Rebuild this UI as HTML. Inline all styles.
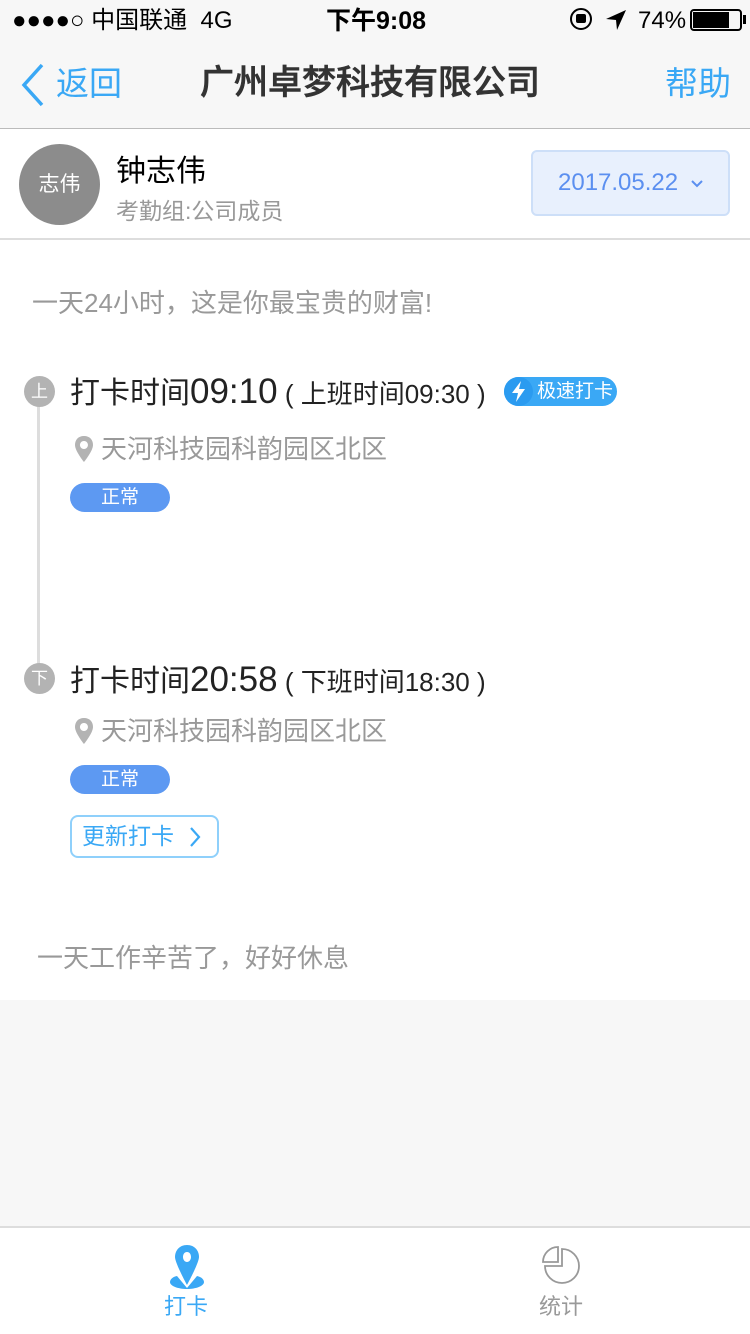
<!DOCTYPE html>
<html><head><meta charset="utf-8"><style>
*{margin:0;padding:0;box-sizing:border-box}
body{width:750px;height:1334px;position:relative;background:#f7f7f7;font-family:"Liberation Sans","Noto Sans CJK SC",sans-serif;overflow:hidden}
.a{position:absolute;white-space:nowrap}
</style></head><body>
<!-- status bar -->
<div class="a" style="left:12px;top:6px;font-size:24px;color:#000;line-height:30px">●●●●○ 中国联通 &nbsp;4G</div>
<div class="a" style="left:326px;top:6px;font-size:25px;font-weight:bold;color:#000;line-height:30px">下午9:08</div>
<div class="a" style="left:570px;top:8px;width:22px;height:22px;border:2px solid #000;border-radius:50%"></div>
<div class="a" style="left:576px;top:14px;width:10px;height:9px;background:#000;border-radius:2px"></div>
<svg class="a" style="left:604px;top:8px" width="24" height="24"><path d="M22 2 L2 11 L12 12 L13 22 Z" fill="#000"/></svg>
<div class="a" style="left:638px;top:6px;font-size:24px;color:#000;line-height:30px">74%</div>
<div class="a" style="left:690px;top:9px;width:52px;height:22px;border:2px solid #000;border-radius:4px"></div>
<div class="a" style="left:693px;top:12px;width:36px;height:16px;background:#000"></div>
<div class="a" style="left:743px;top:15px;width:3px;height:9px;background:#000"></div>
<!-- nav -->
<svg class="a" style="left:18px;top:62px" width="30" height="46"><path d="M24 3 L6 23 L24 43" fill="none" stroke="#3aa8f5" stroke-width="3.5"/></svg>
<div class="a" style="left:56px;top:62px;font-size:33px;color:#3aa8f5;line-height:44px">返回</div>
<div class="a" style="left:200px;top:61px;font-size:34px;font-weight:500;color:#333;line-height:44px;-webkit-text-stroke:0.6px #333">广州卓梦科技有限公司</div>
<div class="a" style="left:665px;top:62px;font-size:33px;color:#3aa8f5;line-height:44px">帮助</div>
<div class="a" style="left:0;top:128px;width:750px;height:1px;background:#bbb"></div>
<!-- white main -->
<div class="a" style="left:0;top:129px;width:750px;height:871px;background:#fff"></div>
<div class="a" style="left:0;top:238px;width:750px;height:2px;background:#ddd"></div>
<div class="a" style="left:19px;top:144px;width:81px;height:81px;border-radius:50%;background:#8c8c8c;color:#fff;font-size:21px;text-align:center;line-height:81px">志伟</div>
<div class="a" style="left:116px;top:153px;font-size:30px;color:#000;line-height:38px">钟志伟</div>
<div class="a" style="left:116px;top:197px;font-size:23px;color:#999;line-height:28px">考勤组:公司成员</div>
<div class="a" style="left:531px;top:150px;width:199px;height:66px;background:#e8f0fd;border:2px solid #cddff8;border-radius:6px;color:#5b8ff0;font-size:24px;line-height:62px;padding-left:25px">2017.05.22</div>
<svg class="a" style="left:690px;top:179px" width="14" height="10"><path d="M2 2 L7 7 L12 2" fill="none" stroke="#5b8ff0" stroke-width="2"/></svg>
<div class="a" style="left:32px;top:287px;font-size:26px;color:#999;line-height:32px">一天24小时，这是你最宝贵的财富!</div>
<!-- timeline -->
<div class="a" style="left:37px;top:392px;width:3px;height:288px;background:#ddd"></div>
<div class="a" style="left:24px;top:376px;width:31px;height:31px;border-radius:50%;background:#b3b3b3;color:#fff;font-size:17px;text-align:center;line-height:31px">上</div>
<div class="a" style="left:70px;top:372px;font-size:30px;color:#222;line-height:40px">打卡时间<span style="font-size:35px">09:10</span><span style="font-size:26px"> ( 上班时间09:30 )</span></div>
<div class="a" style="left:504px;top:377px;width:113px;height:29px;border-radius:15px;background:#3aa8f5;color:#fff;font-size:19px;line-height:29px;padding-left:33px">极速打卡</div>
<div class="a" style="left:504px;top:377px;width:29px;height:29px;border-radius:50%;background:#2b9bf0"></div>
<svg class="a" style="left:508px;top:379px" width="22" height="25"><path d="M13 2 L4 14 L10 14 L8 23 L17 10 L11 10 Z" fill="#fff"/></svg>
<svg class="a" style="left:74px;top:435px" width="20" height="28"><path d="M10 1 C4 1 1 5 1 10 C1 16 10 27 10 27 C10 27 19 16 19 10 C19 5 16 1 10 1 Z M10 6 A4 4 0 1 1 9.9 6 Z" fill="#b3b3b3" fill-rule="evenodd"/></svg>
<div class="a" style="left:101px;top:432px;font-size:26px;color:#999;line-height:34px">天河科技园科韵园区北区</div>
<div class="a" style="left:70px;top:483px;width:100px;height:29px;border-radius:15px;background:#5d99f2;color:#fff;font-size:19px;text-align:center;line-height:29px">正常</div>

<div class="a" style="left:24px;top:663px;width:31px;height:31px;border-radius:50%;background:#b3b3b3;color:#fff;font-size:17px;text-align:center;line-height:31px">下</div>
<div class="a" style="left:70px;top:660px;font-size:30px;color:#222;line-height:40px">打卡时间<span style="font-size:35px">20:58</span><span style="font-size:26px"> ( 下班时间18:30 )</span></div>
<svg class="a" style="left:74px;top:717px" width="20" height="28"><path d="M10 1 C4 1 1 5 1 10 C1 16 10 27 10 27 C10 27 19 16 19 10 C19 5 16 1 10 1 Z M10 6 A4 4 0 1 1 9.9 6 Z" fill="#b3b3b3" fill-rule="evenodd"/></svg>
<div class="a" style="left:101px;top:714px;font-size:26px;color:#999;line-height:34px">天河科技园科韵园区北区</div>
<div class="a" style="left:70px;top:765px;width:100px;height:29px;border-radius:15px;background:#5d99f2;color:#fff;font-size:19px;text-align:center;line-height:29px">正常</div>
<div class="a" style="left:70px;top:815px;width:149px;height:43px;border:2px solid #8fd0fb;border-radius:8px;color:#3aa8f5;font-size:23px;line-height:39px;padding-left:10px">更新打卡</div>
<svg class="a" style="left:188px;top:826px" width="14" height="22"><path d="M3 2 L11 11 L3 20" fill="none" stroke="#3aa8f5" stroke-width="2.2"/></svg>
<div class="a" style="left:37px;top:942px;font-size:26px;color:#999;line-height:32px">一天工作辛苦了，好好休息</div>
<!-- tab bar -->
<div class="a" style="left:0;top:1226px;width:750px;height:108px;background:#fff;border-top:2px solid #ddd"></div>
<svg class="a" style="left:168px;top:1243px" width="38" height="48"><path d="M19 2 C11 2 7 8 7 14 C7 20 19 42 19 42 C19 42 31 20 31 14 C31 8 27 2 19 2 Z M19 9 C16 9 15 12 15 14 C15 17 17 19 19 19 C21 19 23 17 23 14 C23 12 22 9 19 9 Z" fill="#3aa8f5" fill-rule="evenodd"/><path d="M9 33 C3 34 2 38 2 39 C2 43 10 46 19 46 C28 46 36 43 36 39 C36 37 34 34 29 33 L19 45 Z" fill="#3aa8f5"/></svg>
<div class="a" style="left:164px;top:1292px;font-size:22px;color:#3aa8f5;line-height:30px">打卡</div>
<svg class="a" style="left:540px;top:1243px" width="46" height="46"><path d="M22 6 A17 17 0 1 1 5 23 L22 23 Z" fill="none" stroke="#999" stroke-width="1.8"/><path d="M18 4 L18 19 L3 19 A15 15 0 0 1 18 4 Z" fill="none" stroke="#999" stroke-width="1.8"/></svg>
<div class="a" style="left:539px;top:1292px;font-size:22px;color:#999;line-height:30px">统计</div>
</body></html>
